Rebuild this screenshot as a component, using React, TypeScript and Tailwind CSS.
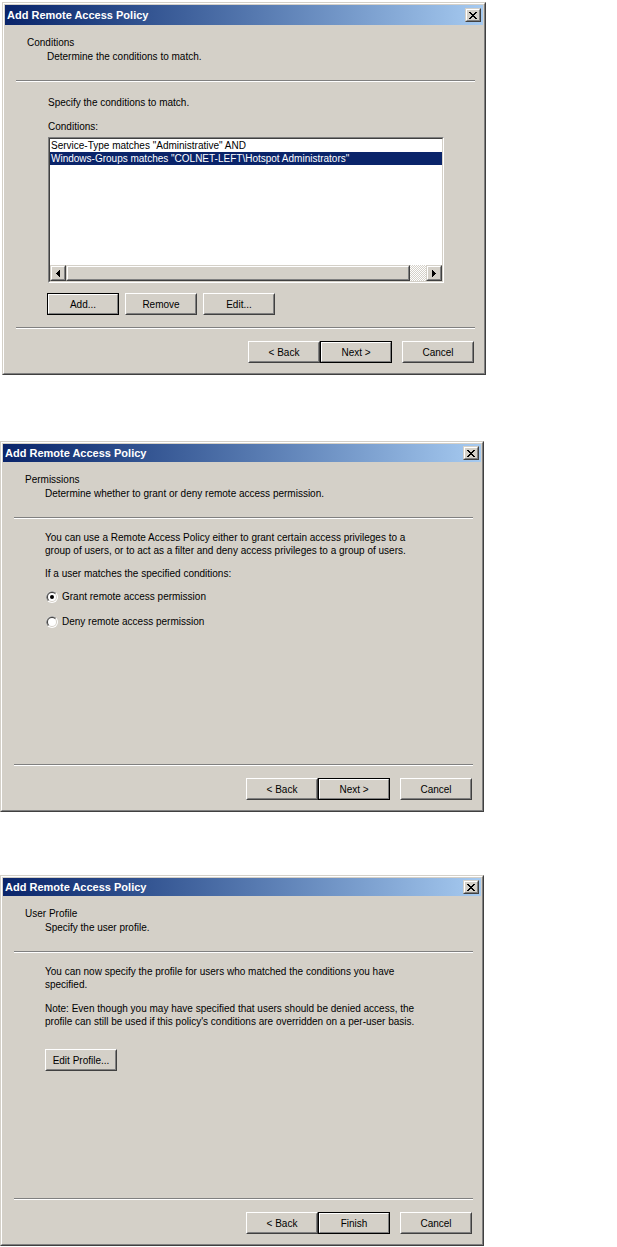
import * as React from 'react'

function CloseGlyph() {
  return (
    <svg width="8" height="7" viewBox="0 0 8 7" shapeRendering="crispEdges" aria-hidden="true">
      <path
        fill="#000"
        d="M0 0h2v1H0zM6 0h2v1H6zM1 1h2v1H1zM5 1h2v1H5zM2 2h4v1H2zM3 3h2v1H3zM2 4h4v1H2zM1 5h2v1H1zM5 5h2v1H5zM0 6h2v1H0zM6 6h2v1H6z"
      />
    </svg>
  )
}

function ArrowGlyph({ dir }: { dir: 'left' | 'right' }) {
  const d =
    dir === 'left'
      ? 'M0 3h1v1H0zM1 2h1v3H1zM2 1h1v5H2zM3 0h1v7H3z'
      : 'M3 3h1v1H3zM2 2h1v3H2zM1 1h1v5H1zM0 0h1v7H0z'
  return (
    <svg width="4" height="7" viewBox="0 0 4 7" shapeRendering="crispEdges" aria-hidden="true">
      <path fill="#000" d={d} />
    </svg>
  )
}

function RadioGlyph({ checked }: { checked?: boolean }) {
  return (
    <svg width="12" height="12" viewBox="0 0 12 12" aria-hidden="true" className="shrink-0">
      <circle cx="6" cy="6" r="6" fill="#ffffff" />
      <path d="M1.76 10.24A6 6 0 0 1 10.24 1.76Z" fill="#808080" />
      <circle cx="6" cy="6" r="5" fill="#d4d0c8" />
      <path d="M2.46 9.54A5 5 0 0 1 9.54 2.46Z" fill="#404040" />
      <circle cx="6" cy="6" r="4" fill="#ffffff" />
      {checked && <circle cx="6" cy="6" r="2" fill="#000000" />}
    </svg>
  )
}

function WinButton({ label, isDefault = false }: { label: string; isDefault?: boolean }) {
  if (isDefault) {
    return (
      <div className="h-[22px] w-[72px] shrink-0 border border-black">
        <div className="flex h-full items-center justify-center border border-t-white border-l-white border-r-[#808080] border-b-[#808080]">
          {label}
        </div>
      </div>
    )
  }
  return (
    <div className="h-[22px] w-[72px] shrink-0 border border-t-white border-l-white border-r-[#404040] border-b-[#404040]">
      <div className="flex h-full items-center justify-center border border-t-[#d4d0c8] border-l-[#d4d0c8] border-r-[#808080] border-b-[#808080]">
        {label}
      </div>
    </div>
  )
}

function Separator() {
  return <div className="ml-[11px] mr-[8px] h-[2px] border-t border-b border-t-[#808080] border-b-white" />
}

function Dialog({
  titleClass,
  heading,
  subheading,
  finishLabel,
  children,
}: {
  titleClass: string
  heading: string
  subheading: string
  finishLabel: string
  children: React.ReactNode
}) {
  return (
    <div className="w-[484px] border border-t-[#d4d0c8] border-l-[#d4d0c8] border-r-[#404040] border-b-[#404040] bg-[#d4d0c8]">
      <div className="border border-t-white border-l-white border-r-[#808080] border-b-[#808080] p-[1px]">
        {/* Caption */}
        <div className={`flex items-center justify-between bg-linear-to-r from-[#0a246a] to-[#a6caf0] pl-[2px] pr-[2px] ${titleClass}`}>
          <span className="text-[11px] font-bold leading-none text-white">Add Remote Access Policy</span>
          <div className="h-[14px] w-[16px] border border-t-[#d4d0c8] border-l-[#d4d0c8] border-r-[#404040] border-b-[#404040]">
            <div className="flex h-full items-center justify-center border border-t-white border-l-white border-r-[#808080] border-b-[#808080] bg-[#d4d0c8] pr-[1px]">
              <CloseGlyph />
            </div>
          </div>
        </div>

        {/* Wizard body */}
        <div className="flex h-[347px] flex-col">
          <div className="pt-[11px]">
            <div className="pl-[22px]">{heading}</div>
            <div className="mt-[1px] pl-[42px]">{subheading}</div>
          </div>
          <div className="mt-[17px]">
            <Separator />
          </div>

          {children}

          <div className="mt-auto">
            <Separator />
            <div className="mt-[12px] flex justify-end pb-[9px] pr-[9px]">
              <WinButton label="< Back" />
              <WinButton label={finishLabel} isDefault />
              <div className="w-[10px]" />
              <WinButton label="Cancel" />
            </div>
          </div>
        </div>
      </div>
    </div>
  )
}

function ScrollButton({ dir }: { dir: 'left' | 'right' }) {
  return (
    <div className="h-[16px] w-[16px] shrink-0 border border-t-[#d4d0c8] border-l-[#d4d0c8] border-r-[#404040] border-b-[#404040]">
      <div className="flex h-full items-center justify-center border border-t-white border-l-white border-r-[#808080] border-b-[#808080] bg-[#d4d0c8]">
        <ArrowGlyph dir={dir} />
      </div>
    </div>
  )
}

function ConditionsList() {
  return (
    <div className="ml-[1px] h-[146px] w-[396px] border border-t-[#808080] border-l-[#808080] border-r-white border-b-white">
      <div className="flex h-full flex-col border border-t-[#404040] border-l-[#404040] border-r-[#d4d0c8] border-b-[#d4d0c8] bg-white">
        <div className="flex-1 overflow-hidden">
          <div className="h-[13px] whitespace-nowrap px-[1px]">Service-Type matches "Administrative" AND</div>
          <div className="h-[13px] whitespace-nowrap bg-[#0a246a] px-[1px] text-white">
            Windows-Groups matches "COLNET-LEFT\Hotspot Administrators"
          </div>
        </div>
        {/* Horizontal scrollbar */}
        <div className="flex h-[16px]">
          <ScrollButton dir="left" />
          <div className="h-[16px] w-[344px] border border-t-[#d4d0c8] border-l-[#d4d0c8] border-r-[#404040] border-b-[#404040]">
            <div className="h-full border border-t-white border-l-white border-r-[#808080] border-b-[#808080] bg-[#d4d0c8]" />
          </div>
          <div className="flex-1 bg-[image:repeating-conic-gradient(#ffffff_0%_25%,#d4d0c8_0%_50%)] bg-[length:2px_2px]" />
          <ScrollButton dir="right" />
        </div>
      </div>
    </div>
  )
}

export default function App() {
  return (
    <div className="min-h-screen bg-white font-['Liberation_Sans',Arial,sans-serif] text-[10px] leading-[13px] text-black">
      {/* Step 1 - Conditions */}
      <div className="pl-[2px] pt-[2px]">
        <Dialog
          titleClass="h-[20px]"
          heading="Conditions"
          subheading="Determine the conditions to match."
          finishLabel="Next >"
        >
          <div className="pl-[43px]">
            <div className="mt-[14px]">Specify the conditions to match.</div>
            <div className="mt-[11px]">Conditions:</div>
            <div className="mt-[4px] -ml-[1px]">
              <ConditionsList />
            </div>
            <div className="mt-[10px] -ml-[1px] flex gap-[6px]">
              <WinButton label="Add..." isDefault />
              <WinButton label="Remove" />
              <WinButton label="Edit..." />
            </div>
          </div>
        </Dialog>
      </div>

      {/* Step 2 - Permissions */}
      <div className="mt-[66px]">
        <Dialog
          titleClass="h-[18px]"
          heading="Permissions"
          subheading="Determine whether to grant or deny remote access permission."
          finishLabel="Next >"
        >
          <div className="pl-[42px]">
            <p className="mt-[12px]">
              You can use a Remote Access Policy either to grant certain access privileges to a
              <br />
              group of users, or to act as a filter and deny access privileges to a group of users.
            </p>
            <div className="mt-[10px]">If a user matches the specified conditions:</div>
            <div className="mt-[10px] flex items-center gap-[4px] pl-[1px]">
              <RadioGlyph checked />
              <span>Grant remote access permission</span>
            </div>
            <div className="mt-[12px] flex items-center gap-[4px] pl-[1px]">
              <RadioGlyph />
              <span>Deny remote access permission</span>
            </div>
          </div>
        </Dialog>
      </div>

      {/* Step 3 - User Profile */}
      <div className="mt-[63px] pb-[1px]">
        <Dialog
          titleClass="h-[18px]"
          heading="User Profile"
          subheading="Specify the user profile."
          finishLabel="Finish"
        >
          <div className="pl-[42px]">
            <p className="mt-[12px]">
              You can now specify the profile for users who matched the conditions you have
              <br />
              specified.
            </p>
            <p className="mt-[11px]">
              Note: Even though you may have specified that users should be denied access, the
              <br />
              profile can still be used if this policy's conditions are overridden on a per-user basis.
            </p>
            <div className="mt-[21px]">
              <WinButton label="Edit Profile..." />
            </div>
          </div>
        </Dialog>
      </div>
    </div>
  )
}
